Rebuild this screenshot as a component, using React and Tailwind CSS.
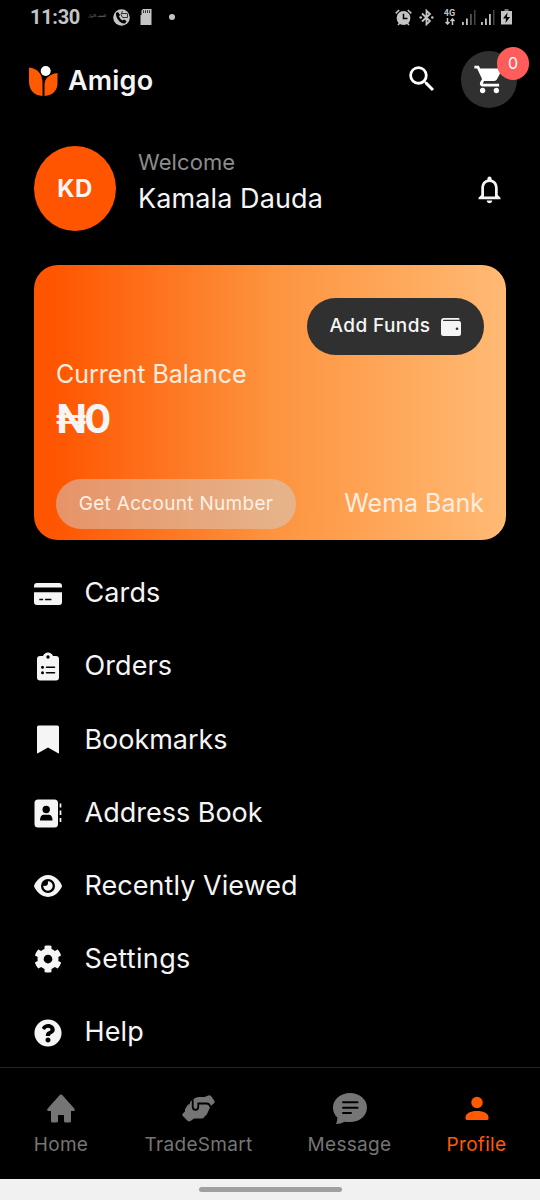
import React from 'react';
import { FaCog, FaQuestionCircle } from 'react-icons/fa';
import { FaEye } from 'react-icons/fa6';
import { MdSearch, MdShoppingCart, MdNotificationsNone } from 'react-icons/md';

const AmigoLogo = () => (
  <svg width="29" height="31" viewBox="0 0 29 31">
    <path d="M0 1.5C9 2.5 13.500 8.500 13.500 17V30C5 29.500 0 24 0 15.500Z" fill="#ff5a00" />
    <path d="M28.500 7C20 8 15.500 12.500 15.500 19V30C23.500 29.500 28.500 24.500 28.500 17Z" fill="#ff5a00" />
    <circle cx="16.700" cy="5" r="6" fill="#000" />
    <circle cx="16.700" cy="5" r="5" fill="#fff" />
  </svg>
);

const WalletIcon = () => (
  <svg width="20" height="18" viewBox="0 0 20 18">
    <path d="M3 0H17.500Q18.500 0 18.500 1.200V1.800H3Q2 1.800 2 2.400Q2 3 3 3H18Q20 3 20 5V15.500Q20 18 17.500 18H2.500Q0 18 0 15.500V3Q0 0 3 0Z" fill="currentColor" />
    <circle cx="16" cy="10.800" r="1.300" fill="#303030" />
  </svg>
);

const CardIcon = () => (
  <svg width="28" height="22" viewBox="0 0 29 22" preserveAspectRatio="none">
    <path d="M3 0H26Q29 0 29 3V4.500H0V3Q0 0 3 0Z" fill="currentColor" />
    <path d="M0 9.300H29V19Q29 22 26 22H3Q0 22 0 19Z" fill="currentColor" />
    <path d="M5.500 16.500H9.500M11.500 16.500H18" stroke="#000" strokeWidth="1.400" />
  </svg>
);

const OrdersIcon = () => (
  <svg width="22" height="29" viewBox="0 0 22 29">
    <path d="M3 4H6Q7.500 0.500 11 0.500T16 4H19Q22 4 22 7V25.500Q22 28.500 19 28.500H3Q0 28.500 0 25.500V7Q0 4 3 4Z" fill="currentColor" />
    <circle cx="11" cy="5" r="1.700" fill="#000" />
    <circle cx="5.500" cy="15.300" r="1.500" fill="#000" />
    <circle cx="5.500" cy="20.700" r="1.500" fill="#000" />
    <path d="M9.500 15.300H17.500M9.500 20.700H17.500" stroke="#000" strokeWidth="1.500" strokeLinecap="round" />
  </svg>
);

const BookmarkIcon = () => (
  <svg width="22" height="29" viewBox="0 0 22 29" fill="currentColor">
    <path d="M1.500 0.500H20.500Q22 0.500 22 2V27.500Q22 29 20.700 28L11 22.500L1.300 28Q0 29 0 27.500V2Q0 0.500 1.500 0.500Z" />
  </svg>
);

const AddressIcon = () => (
  <svg width="28" height="29" viewBox="0 0 28 29">
    <rect x="0.500" y="0.500" width="23.500" height="28" rx="3.500" fill="currentColor" />
    <circle cx="12.200" cy="10.500" r="3.700" fill="#000" />
    <path d="M6 21.500Q6 15.800 10 15.800H14.500Q18.500 15.800 18.500 21.500Z" fill="#000" />
    <path d="M26.500 4.500V8.500M26.500 11.500V16M26.500 19V23" stroke="currentColor" strokeWidth="1.700" />
  </svg>
);

const HomeIcon = () => (
  <svg width="28" height="29" viewBox="0 0 28 29" fill="currentColor">
    <path d="M13 0.800Q14 0 15 0.800L27.500 14.800Q28.500 17 26.500 17H24V27Q24 28.500 22.500 28.500H18.500Q17 28.500 17 27V21H11V27Q11 28.500 9.500 28.500H5.500Q4 28.500 4 27V17H1.500Q-0.500 17 0.500 14.800Z" />
  </svg>
);

const TradeIcon = () => (
  <svg width="33" height="27" viewBox="0 0 33 27">
    <path
      d="M0.800 18.500L3 16.500V14.300L5.800 9.800L7.500 9.300L8.500 6.500L12 3.700Q14 2 17 2H22.500L26.300 0.500Q28 -0.300 29 1L32.500 6Q33 7.500 31.800 8.500L28.500 11.300L27 14.500L25.800 17.500Q25 20 23 21Q22 23.500 19.500 23.500H12L8.500 26Q7 27 5.500 25.800L0.800 21Q0 19.700 0.800 18.500Z"
      fill="currentColor"
    />
    <path d="M10.700 4.500V11.500Q10.700 14.800 13.500 14.800Q16.300 14.800 16.300 11.500V8.500H24.500Q27.800 8.500 28.200 12" stroke="#000" strokeWidth="1.800" fill="none" />
  </svg>
);

const MessageIcon = () => (
  <svg width="34" height="31" viewBox="0 0 34 31">
    <path d="M17 0C26.500 0 34 6.500 34 14.500C34 23 26.500 29 17 29Q14 29 11.500 28.800Q8 31 3 31Q4.500 28.500 4.300 24.500C1.500 22 0 18.500 0 14.500C0 6.500 7.500 0 17 0Z" fill="currentColor" />
    <path d="M10 9.300H24.500M10 14.700H24.500M10 20H18" stroke="#000" strokeWidth="2" strokeLinecap="round" />
  </svg>
);

const ProfileIcon = () => (
  <svg width="24" height="24" viewBox="0 0 24 24" fill="currentColor">
    <circle cx="12" cy="6.500" r="5.700" />
    <path d="M0.500 21.500C0.500 17.500 5 15 12 15S23.500 17.500 23.500 21.500V22.500Q23.500 24 22 24H2Q0.500 24 0.500 22.500Z" />
  </svg>
);

const CallIcon = () => (
  <svg width="17" height="17" viewBox="0 0 17 17">
    <circle cx="8.500" cy="8.500" r="8.300" fill="#c4c4c4" />
    <path d="M3 4L5 3L7 6L6 7.500Q7 10 9.500 11.500L11 10.500L13.500 12L12.500 14Q10 15.500 6.500 12.500Q2.500 8.500 3 4Z" fill="#000" />
    <path d="M9.500 2L8 5.500L9.500 8.500H14.500V4.500M9 4.500H14" stroke="#333" strokeWidth="1" fill="none" />
  </svg>
);

const SdCardIcon = () => (
  <svg width="12" height="16" viewBox="0 0 12 16">
    <path d="M3 0H11.500V16H0.500V6H1.500V1.500Z" fill="#c4c4c4" />
    <path d="M3.500 1.200V4M5.500 1.200V4M7.500 1.200V4M9.500 1.200V4" stroke="#333" strokeWidth="1" />
  </svg>
);

const AlarmIcon = () => (
  <svg width="17" height="17" viewBox="0 0 17 17">
    <circle cx="8.500" cy="9" r="6.900" fill="#c4c4c4" />
    <path d="M0.700 4.300L4.200 1M16.300 4.300L12.800 1M3 16L4.800 14M14 16L12.200 14" stroke="#c4c4c4" strokeWidth="1.600" />
    <path d="M8.500 4.800V9.500H12.500" stroke="#000" strokeWidth="1.500" fill="none" />
  </svg>
);

const BluetoothIcon = () => (
  <svg width="15" height="17" viewBox="0 0 15 17">
    <path d="M3 4.500L11 12L7.500 15.300V1.700L11 5L3 12.500" stroke="currentColor" strokeWidth="1.800" fill="none" />
    <circle cx="1.700" cy="8.500" r="1.300" fill="currentColor" />
    <circle cx="13.300" cy="8.500" r="1.300" fill="currentColor" />
  </svg>
);

const SignalIcon = ({ dim }) => (
  <svg width="14" height="15" viewBox="0 0 14 15">
    <rect x="0" y="12" width="1.800" height="3" fill="#c4c4c4" />
    <rect x="4" y="8.500" width="1.800" height="6.500" fill="#c4c4c4" />
    <rect x="8" y="4" width="1.800" height="11" fill={dim ? '#555' : '#c4c4c4'} />
    <rect x="12" y="0" width="1.500" height="15" fill="#444" />
  </svg>
);

const BatteryIcon = () => (
  <svg width="11" height="16" viewBox="0 0 11 16">
    <path d="M3.500 0H7.500V2H3.500Z" fill="#777" />
    <path d="M0 2H11V15.500H0Z" fill="#c4c4c4" />
    <path d="M6.500 3.500L2 9.500H5L4.500 14L9 8H6Z" fill="#000" />
  </svg>
);

const menuItems = [
  { label: 'Cards', icon: <CardIcon />, tracking: 'tracking-[0.1px]' },
  { label: 'Orders', icon: <OrdersIcon />, tracking: 'tracking-[0.1px]' },
  { label: 'Bookmarks', icon: <BookmarkIcon />, tracking: 'tracking-[-0.05px]' },
  { label: 'Address Book', icon: <AddressIcon />, tracking: 'tracking-[0px]' },
  { label: 'Recently Viewed', icon: <FaEye size={28} />, tracking: 'tracking-[0.05px]' },
  { label: 'Settings', icon: <FaCog size={28} />, tracking: 'tracking-[0.35px]' },
  { label: 'Help', icon: <FaQuestionCircle size={28} />, tracking: 'tracking-[0.1px]' },
];

const navItems = [
  { label: 'Home', icon: <HomeIcon />, width: 'w-[122px]' },
  { label: 'TradeSmart', icon: <TradeIcon />, width: 'w-[153px]' },
  { label: 'Message', icon: <MessageIcon />, width: 'w-[149px]' },
  { label: 'Profile', icon: <ProfileIcon />, width: 'w-[105px]', active: true },
];

const StatusBar = () => (
  <div className="flex h-[34px] shrink-0 items-center justify-between pr-[28px] pl-[30px] text-[#c4c4c4]">
    <div className="flex items-center">
      <span className="w-[50px] font-[Roboto] text-[20px] font-bold tracking-[-0.3px]">11:30</span>
      <span className="ml-[8px] w-[17px] text-[3.5px] whitespace-nowrap text-[#888]">الصف الاول</span>
      <span className="ml-[8px]"><CallIcon /></span>
      <span className="ml-[10px]"><SdCardIcon /></span>
      <span className="ml-[17px] size-[6px] rounded-full bg-[#c4c4c4]" />
    </div>
    <div className="flex items-center">
      <AlarmIcon />
      <span className="ml-[7px]"><BluetoothIcon /></span>
      <div className="ml-[9px] flex w-[13px] flex-col items-center">
        <span className="font-[Roboto] text-[9px] leading-[9px] font-bold">4G</span>
        <svg width="10" height="7" viewBox="0 0 10 7" fill="none" stroke="currentColor" strokeWidth="1.500">
          <path d="M2.500 0V6M0.500 4L2.500 6L4.500 4M7.500 7V1M5.500 3L7.500 1L9.500 3" />
        </svg>
      </div>
      <span className="ml-[6px]"><SignalIcon dim /></span>
      <span className="ml-[5px]"><SignalIcon /></span>
      <span className="ml-[6px]"><BatteryIcon /></span>
    </div>
  </div>
);

const Header = () => (
  <header className="flex h-[94px] shrink-0 items-center justify-between pr-[23px] pl-[29px]">
    <div className="flex items-center gap-[10px]">
      <AmigoLogo />
      <span className="pt-[1px] text-[27px] font-semibold tracking-[0.2px]">Amigo</span>
    </div>
    <div className="flex items-center gap-[22px] pb-[4px] text-white">
      <MdSearch size={34} />
      <div className="relative flex h-[57px] w-[56px] items-center justify-center rounded-full bg-[#303030]">
        <MdShoppingCart size={33} />
        <span className="absolute -top-[4px] -right-[12px] flex h-[33px] w-[32px] items-center justify-center rounded-full bg-[#ff5c5c] text-[16px]">
          0
        </span>
      </div>
    </div>
  </header>
);

export default function App() {
  return (
    <div className="flex h-[1200px] w-[540px] flex-col overflow-hidden bg-black font-[Inter,sans-serif] text-[#f5f5f5]">
      <StatusBar />
      <Header />

      <section className="mt-[18px] flex h-[85px] shrink-0 items-center px-[34px]">
        <div className="flex h-[85px] w-[82px] items-center justify-center rounded-[50%] bg-[#ff5500] text-[24px] font-bold tracking-[0.4px]">
          KD
        </div>
        <div className="ml-[22px] flex flex-1 flex-col pb-[15px]">
          <span className="text-[22px] leading-[35px] tracking-[0.1px] text-[#8c8c8c]">Welcome</span>
          <span className="text-[27px] leading-[37px] tracking-[0.1px]">Kamala Dauda</span>
        </div>
        <MdNotificationsNone size={33} className="mt-[2px]" />
      </section>

      <section className="mx-[34px] mt-[34px] flex h-[275px] shrink-0 flex-col rounded-[24px] bg-linear-to-r/srgb from-[#ff5500] from-[4%] via-[#fd933e] to-[#ffba74] px-[22px]">
        <button className="mt-[33px] flex h-[57px] w-[177px] items-center justify-center gap-[11px] self-end rounded-full bg-[#303030] text-[19px] font-medium tracking-[0.4px]">
          Add Funds <WalletIcon />
        </button>
        <span className="mt-[1px] text-[25px] leading-[36px] text-[#ffeee0]">Current Balance</span>
        <span className="text-[40px] leading-[54px] font-bold tracking-[-2px]">₦0</span>
        <div className="mt-[33px] flex items-center justify-between">
          <button className="h-[50px] w-[240px] rounded-full bg-[#d0d0d0]/50 text-[19px] tracking-[0.3px] text-[#fff0e4]">
            Get Account Number
          </button>
          <span className="text-[25px] text-[#ffeee0]">Wema Bank</span>
        </div>
      </section>

      <ul className="mt-[32.5px] flex shrink-0 flex-col gap-[31.2px] px-[33px]">
        {menuItems.map((item) => (
          <li key={item.label} className="flex h-[42px] items-center">
            <span className="flex w-[29px] justify-center">{item.icon}</span>
            <span className={`ml-[22.5px] text-[27px] ${item.tracking}`}>{item.label}</span>
          </li>
        ))}
      </ul>

      <nav className="mt-auto flex h-[112px] shrink-0 border-t border-[#242424] text-[#757575]">
        {navItems.map((item) => (
          <div
            key={item.label}
            className={`flex shrink-0 flex-col items-center pt-[23px] ${item.width} ${item.active ? 'text-[#ff5a00]' : ''}`}
          >
            <span className="flex h-[34px] items-center">{item.icon}</span>
            <span className="mt-[6px] text-[19px] leading-[28px] tracking-[0.3px]">{item.label}</span>
          </div>
        ))}
      </nav>
      <div className="flex h-[21px] shrink-0 items-center justify-center bg-[#f1f1f1]">
        <span className="h-[5px] w-[143px] rounded-full bg-[#a0a0a0]" />
      </div>
    </div>
  );
}
